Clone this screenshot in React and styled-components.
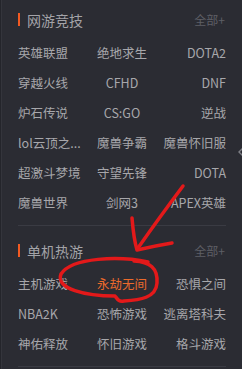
import React from "react";
import styled, { createGlobalStyle } from "styled-components";

const sections = [
  {
    title: "网游竞技",
    first: true,
    games: [
      "英雄联盟", "绝地求生", "DOTA2",
      "穿越火线", "CFHD", "DNF",
      "炉石传说", "CS:GO", "逆战",
      "lol云顶之...", "魔兽争霸", "魔兽怀旧服",
      "超激斗梦境", "守望先锋", "DOTA",
      "魔兽世界", "剑网3", "APEX英雄",
    ],
  },
  {
    title: "单机热游",
    games: [
      "主机游戏", "永劫无间", "恐惧之间",
      "NBA2K", "恐怖游戏", "逃离塔科夫",
      "神佑释放", "怀旧游戏", "格斗游戏",
    ],
    active: "永劫无间",
  },
];

const GameMenu = () => {
  return (
    <Panel>
      <GlobalStyle />
      {sections.map((s) => (
        <Section key={s.title} first={s.first}>
          <Header>
            <Title>{s.title}</Title>
            <More>全部+</More>
          </Header>
          <Grid>
            {s.games.map((g, i) => (
              <Item key={g} col={i % 3} active={g === s.active}>
                {g}
              </Item>
            ))}
          </Grid>
        </Section>
      ))}

      <Collapse>
        <svg width="8" height="10" viewBox="0 0 8 10">
          <path d="M6 1 L2 5 L6 9" fill="none" stroke="#7c7d84" strokeWidth="1.4" />
        </svg>
      </Collapse>

      <Marks viewBox="0 0 242 369">
        <path d="M183 186 C168 206, 152 228, 138 248" />
        <path d="M132 218 C133 230, 134 240, 137 250 C150 247, 160 245, 172 243" />
        <path d="M148 262 C120 256, 72 257, 61 274 C55 289, 86 296, 115 296 C118 300, 119 302, 124 301 C140 300, 156 298, 157 283 C158 268, 150 262, 134 261" />
      </Marks>
    </Panel>
  );
};

const GlobalStyle = createGlobalStyle`
  html, body {
    margin: 0;
    background: #2b2c33;
  }
`;

const Panel = styled.div`
  position: relative;
  width: 242px;
  height: 369px;
  overflow: hidden;
  background: #2b2c33;
  box-shadow: inset 1px 0 0 #24252b, inset 2px 0 0 #34353c;
  font-family: "Noto Sans CJK SC", "Noto Sans", sans-serif;
  box-sizing: border-box;
  padding: 0 16px 0 18px;
`;

const Section = styled.div`
  padding-top: ${(p) => (p.first ? "4.5px" : "10px")};
  padding-bottom: 7px;
  border-bottom: 1px solid #3a3b43;
`;

const Header = styled.div`
  display: flex;
  align-items: center;
  justify-content: space-between;
  height: 30px;
  margin-bottom: 3px;
`;

const Title = styled.div`
  border-left: 2px solid #f25a22;
  padding-left: 7px;
  height: 13px;
  display: flex;
  align-items: center;
  font-size: 14px;
  color: #a3a3a8;
`;

const More = styled.div`
  font-size: 12px;
  color: #5e5f66;
  padding-right: 1px;
`;

const Grid = styled.div`
  display: grid;
  grid-template-columns: 1fr 1fr 1fr;
  grid-auto-rows: 30px;
  align-items: center;
`;

const Item = styled.div`
  font-size: 12.5px;
  white-space: nowrap;
  color: ${(p) => (p.active ? "#ec6a2c" : "#a7a7ab")};
  text-align: ${(p) => ["left", "center", "right"][p.col]};
`;

const Collapse = styled.div`
  position: absolute;
  right: -3px;
  top: 147px;
  display: flex;
`;

const Marks = styled.svg`
  position: absolute;
  left: 0;
  top: 0;
  width: 242px;
  height: 369px;
  pointer-events: none;

  path {
    fill: none;
    stroke: #e3191a;
    stroke-width: 3.5;
    stroke-linecap: round;
    stroke-linejoin: round;
  }
`;

export default GameMenu;
